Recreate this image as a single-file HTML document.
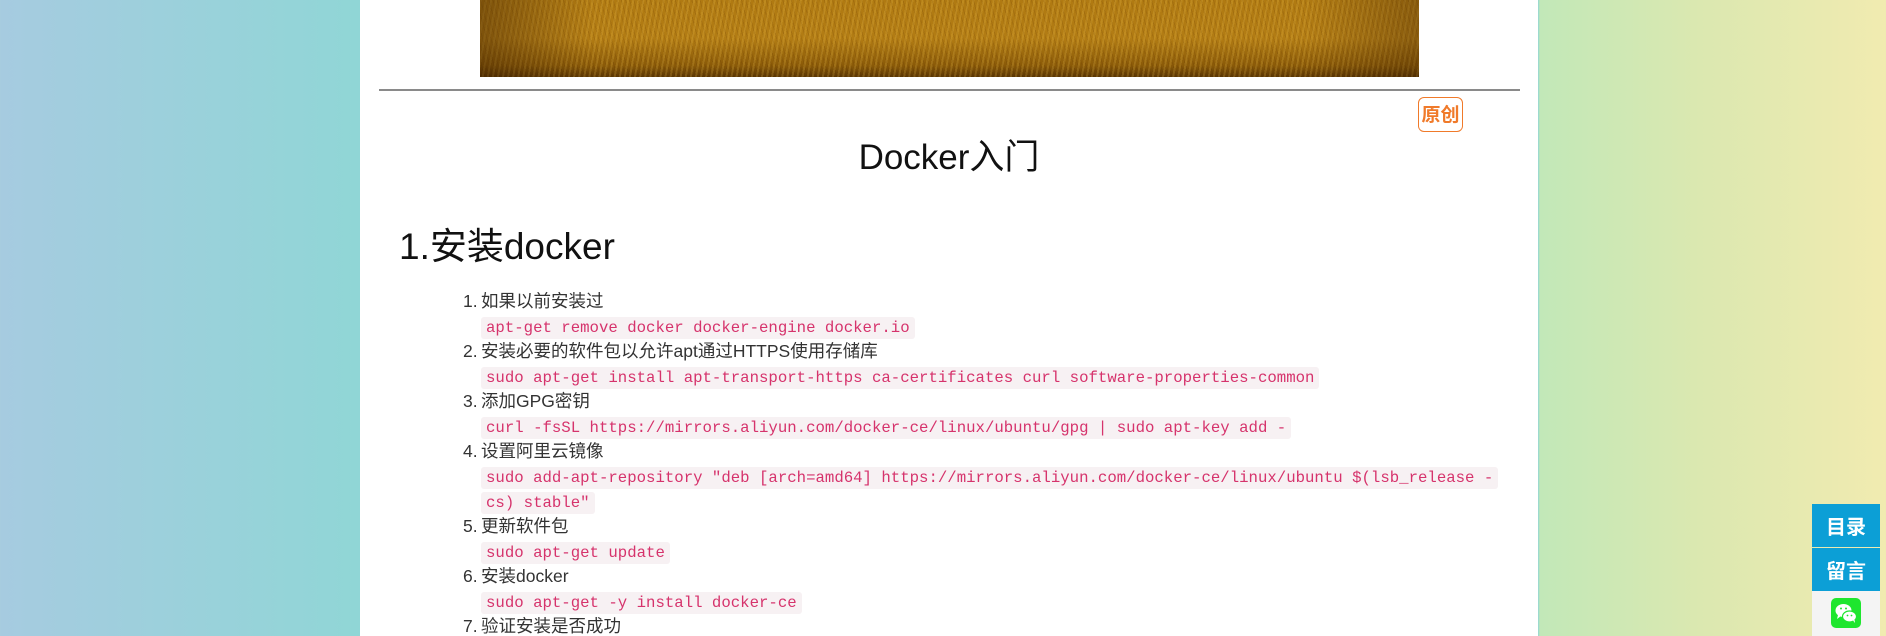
<!DOCTYPE html>
<html><head><meta charset="utf-8"><style>
*{margin:0;padding:0;box-sizing:border-box}
html,body{width:1886px;height:636px;overflow:hidden}
body{position:relative;background:linear-gradient(90deg,#a6cbe0 0px,#90d6d6 360px,#90d6d6 1538px,#c2e8b8 1540px,#dbe8b0 1700px,#f1ebb0 1886px);font-family:"Liberation Sans","Noto Sans CJK SC",sans-serif}
.panel{position:absolute;left:360px;top:0;width:1178px;height:636px;background:#fff}
.img{position:absolute;left:480px;top:0;width:939px;height:77px;background:
repeating-linear-gradient(100deg,rgba(255,210,90,.18) 0 2px,rgba(0,0,0,0) 2px 5px),
repeating-linear-gradient(75deg,rgba(80,40,0,.15) 0 1px,rgba(0,0,0,0) 1px 4px),
linear-gradient(180deg,#b07a12 0%,#b27c14 50%,#8a5a08 85%,#5a3604 100%)}
.img:before{content:"";position:absolute;inset:0;background:linear-gradient(90deg,rgba(60,30,0,.45),rgba(0,0,0,0) 12%,rgba(0,0,0,0) 88%,rgba(60,30,0,.35))}
.hr{position:absolute;left:379px;top:89px;width:1141px;height:2px;background:#8a8a8a}
.badge{position:absolute;left:1418px;top:97px;width:45px;height:35px;border:1.5px solid #f07a2a;border-radius:6px;color:#f07a2a;font-weight:bold;font-size:19px;line-height:32px;text-align:center;font-family:"Noto Sans CJK SC",sans-serif}
.title{position:absolute;left:360px;width:1178px;top:135px;text-align:center;font-size:35px;color:#111;line-height:46px}
.h2{position:absolute;left:399px;top:222px;font-size:37px;color:#111;line-height:50px}
.ol{position:absolute;left:481px;top:289px;width:1100px;font-size:17.5px;color:#333}
.l{position:relative;height:25px;line-height:25px;white-space:nowrap;overflow:visible}
.l .n{position:absolute;left:-18px}
code{font-family:"Liberation Mono",monospace;font-size:15.7px;line-height:20px;color:#d6336c;background:#f7f1f3;padding:2px 5px;border-radius:3px;white-space:nowrap}
.w{position:absolute;left:1812px;width:68px;color:#fff;font-weight:bold;font-size:20px;text-align:center;background:#0c9fd6;font-family:"Noto Sans CJK SC",sans-serif}
</style></head><body>
<div class="panel"></div>
<div class="img"></div>
<div class="hr"></div>
<div class="badge">原创</div>
<div class="title">Docker入门</div>
<div class="h2">1.安装docker</div>
<div class="ol">
<div class="l"><span class="n">1.</span>如果以前安装过</div>
<div class="l"><code>apt-get remove docker docker-engine docker.io</code></div>
<div class="l"><span class="n">2.</span>安装必要的软件包以允许apt通过HTTPS使用存储库</div>
<div class="l"><code>sudo apt-get install apt-transport-https ca-certificates curl software-properties-common</code></div>
<div class="l"><span class="n">3.</span>添加GPG密钥</div>
<div class="l"><code>curl -fsSL https://mirrors.aliyun.com/docker-ce/linux/ubuntu/gpg | sudo apt-key add -</code></div>
<div class="l"><span class="n">4.</span>设置阿里云镜像</div>
<div class="l"><code>sudo add-apt-repository "deb [arch=amd64] https://mirrors.aliyun.com/docker-ce/linux/ubuntu $(lsb_release -</code></div>
<div class="l"><code>cs) stable"</code></div>
<div class="l"><span class="n">5.</span>更新软件包</div>
<div class="l"><code>sudo apt-get update</code></div>
<div class="l"><span class="n">6.</span>安装docker</div>
<div class="l"><code>sudo apt-get -y install docker-ce</code></div>
<div class="l"><span class="n">7.</span>验证安装是否成功</div>
</div>
<div class="w" style="top:504px;height:43px;line-height:43px">目录</div>
<div class="w" style="top:548px;height:43px;line-height:43px">留言</div>
<div class="w" style="top:591px;height:45px;background:#f4f4f4">
<svg width="30" height="30" viewBox="0 0 30 30" style="position:absolute;left:19px;top:7px">
<rect width="30" height="30" rx="5" fill="#1ee62e"/>
<ellipse cx="12.5" cy="12.5" rx="8" ry="6.5" fill="#fff"/>
<path d="M7 17 L6 21 L10 18Z" fill="#fff"/>
<ellipse cx="18.5" cy="18.5" rx="7" ry="5.5" fill="#fff" stroke="#1ee62e" stroke-width="1.2"/>
<path d="M22 22.5 L24 25 L23.5 21.5Z" fill="#fff"/>
<circle cx="10" cy="10.5" r="1" fill="#1ee62e"/><circle cx="15" cy="10.5" r="1" fill="#1ee62e"/>
<circle cx="16.5" cy="17.5" r="0.9" fill="#1ee62e"/><circle cx="20.5" cy="17.5" r="0.9" fill="#1ee62e"/>
</svg></div>
</body></html>
